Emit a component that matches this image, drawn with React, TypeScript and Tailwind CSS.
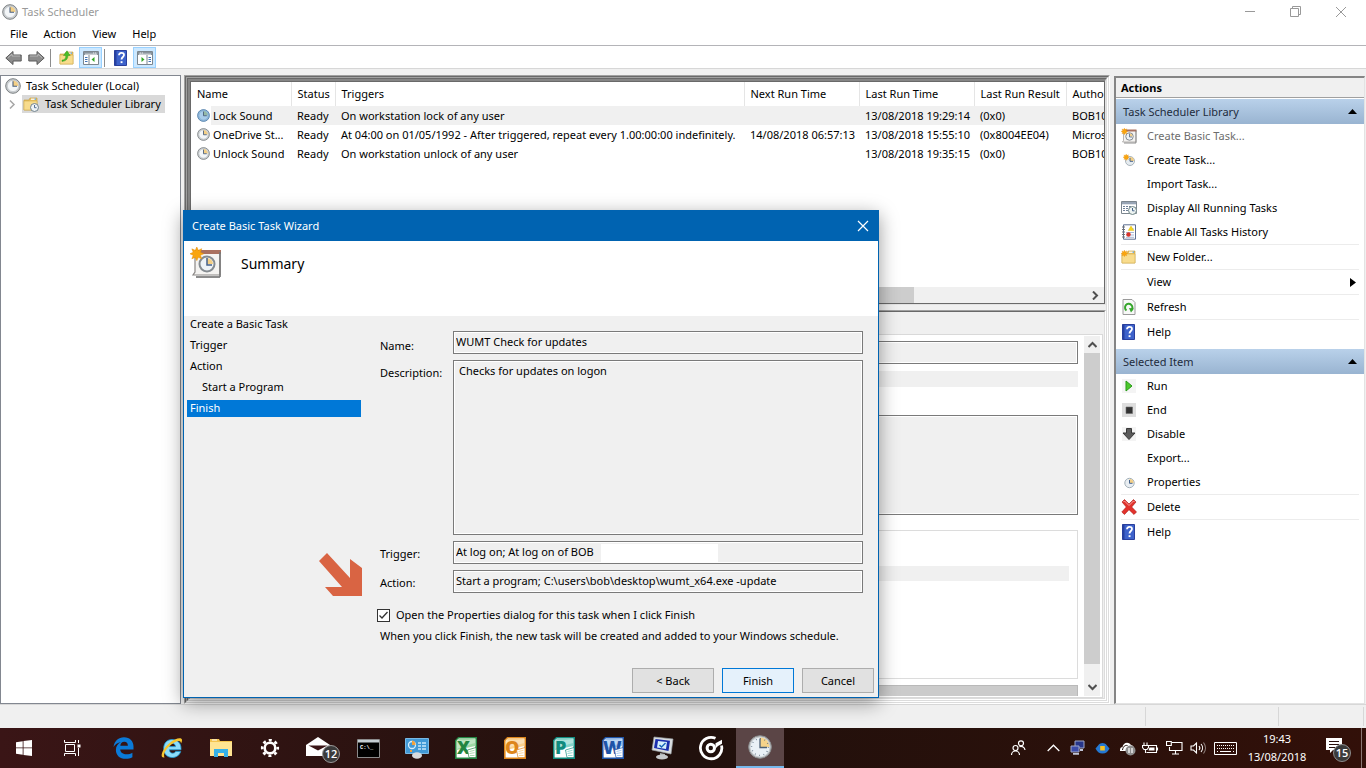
import { useState, ReactNode } from "react"

interface Task { name: string; triggers: string; next: string; last: string; result: string; author: string }
interface Action { label: string; icon?: ReactNode; sep?: boolean; off?: boolean; sub?: boolean }

const tasks: Task[] = [
  { name: "Lock Sound", triggers: "On workstation lock of any user", next: "", last: "13/08/2018 19:29:14", result: "(0x0)", author: "BOB10\\bob" },
  { name: "OneDrive St...", triggers: "At 04:00 on 01/05/1992 - After triggered, repeat every 1.00:00:00 indefinitely.", next: "14/08/2018 06:57:13", last: "13/08/2018 15:55:10", result: "(0x8004EE04)", author: "Microsoft" },
  { name: "Unlock Sound", triggers: "On workstation unlock of any user", next: "", last: "13/08/2018 19:35:15", result: "(0x0)", author: "BOB10\\bob" },
]

const columns = [
  { title: "Name", w: "w-[100px]" },
  { title: "Status", w: "w-11" },
  { title: "Triggers", w: "w-[409px]" },
  { title: "Next Run Time", w: "w-[115px]" },
  { title: "Last Run Time", w: "w-[115px]" },
  { title: "Last Run Result", w: "w-[92px]" },
  { title: "Author", w: "" },
]

function Clock({ size = 16, blue = false }: { size?: number; blue?: boolean }) {
  return (
    <svg width={size} height={size} viewBox="0 0 16 16" className="shrink-0">
      <circle cx="8" cy="8" r="7.3" fill={blue ? "#8fb8dc" : "#c9cdd0"} stroke={blue ? "#4d7ba6" : "#7d8183"} strokeWidth="1" />
      <circle cx="8" cy="8" r="5.6" fill={blue ? "#a9cdea" : "#f3f6f8"} stroke={blue ? "#7aa3c8" : "#b4b9bc"} strokeWidth="0.5" />
      <path d="M8 8V2.6A5.4 5.4 0 0 1 13.4 8Z" fill={blue ? "#94b9a6" : "#f3cf86"} />
      <path d="M8 3.2V8.3H12" fill="none" stroke="#4a5f7c" strokeWidth="1.1" />
    </svg>
  )
}

// larger face with hour ticks
function BigClock() {
  return (
    <svg width="24" height="24" viewBox="0 0 24 24">
      <circle cx="12" cy="12" r="11.3" fill="#c4c8ca" stroke="#8a8d8f" />
      <circle cx="12" cy="12" r="9.6" fill="#eaf1f6" />
      <path d="M12 12V2.4A9.6 9.6 0 0 1 21.6 12z" fill="#f6d389" />
      <circle cx="12" cy="12" r="8.4" fill="none" stroke="#5d6f80" strokeWidth="1.4" strokeDasharray="0.7 3.7" />
      <path d="M12 3.5V12.500H19" fill="none" stroke="#4d6074" strokeWidth="1.3" />
    </svg>
  )
}

function Star({ x = 0, y = 0, s = 1 }: { x?: number; y?: number; s?: number }) {
  return (
    <path transform={`translate(${x} ${y}) scale(${s})`} fill="#f9a50f" stroke="#e68a00" strokeWidth="0.3"
      d="M4 0l.9 2 2-1-.8 2.1L8 4l-1.900.9.800 2-2-.8L4 8l-.9-1.900-2 .800.800-2L0 4l1.900-.9-.8-2 2 .9z" />
  )
}

function TaskPage({ size = 16 }: { size?: number }) {
  return (
    <svg width={size} height={size} viewBox="0 0 32 32">
      <path d="M6 29h24v2H6z" fill="#8c8c8c" />
      <path d="M5 5h25v23H3l2-3z" fill="#f4f3f1" stroke="#8a8785" strokeWidth="1.2" />
      <path d="M5 3h26v4H5z" fill="#a9705f" />
      <path d="M30 5v25" stroke="#777" strokeWidth="1.6" />
      <circle cx="17" cy="17" r="7.500" fill="#eef3f7" stroke="#858b90" strokeWidth="2" />
      <path d="M17 17v-6a6 6 0 0 1 6 6z" fill="#f3cf86" />
      <path d="M17 11v7h5" fill="none" stroke="#45628a" strokeWidth="1.5" />
      <Star s={1.7} />
    </svg>
  )
}

function Folder({ kind }: { kind?: "clock" | "star" | "up" }) {
  return (
    <svg width="16" height="16" viewBox="0 0 16 16">
      <path d="M1 4h5l1-2h7v12H1z" fill="#e9c161" stroke="#c49a3a" strokeWidth="0.6" />
      <path d="M8 2.6h5v1.2H8z" fill="#fff" /><path d="M11.6 2.6H13v1.2h-1.4z" fill="#4a9be0" />
      <path d="M1 5h13v9H1z" fill="#f8dc8d" stroke="#d5ae4f" strokeWidth="0.6" />
      {kind === "star" && <Star s={0.85} y={1} />}
      {kind === "up" && <path d="M3 10c3 0 4-2 3.700-4.500H4.500L8 .8l3.200 4.700H9C9 9 7 11 3 11.500z" fill="#48bf28" stroke="#2a8a13" strokeWidth="0.4" />}
      {kind === "clock" && (
        <g>
          <circle cx="11.500" cy="11.500" r="4" fill="#eef3f7" stroke="#73838e" />
          <path d="M11.500 9v2.700h2" fill="none" stroke="#45628a" strokeWidth="0.9" />
        </g>
      )}
    </svg>
  )
}

function HelpIcon() {
  return (
    <svg width="16" height="16" viewBox="0 0 16 16">
      <path d="M1.500.5h12v15h-12z" fill="#3d62cb" stroke="#2a3f9c" />
      <path d="M1.500.5h2v15h-2z" fill="#2741a0" />
      <path d="M6 5.300C6 2 11 2 11 5c0 2-2.500 2-2.500 4.500" fill="none" stroke="#fff" strokeWidth="1.800" />
      <path d="M7.600 11.200h1.900v1.900H7.600z" fill="#fff" />
    </svg>
  )
}

function Panel({ flip = false }: { flip?: boolean }) {
  return (
    <svg width="16" height="14" viewBox="0 0 16 14" className={flip ? "-scale-x-100" : ""}>
      <path d="M.5.5h15v13H.5z" fill="#fff" stroke="#7c868e" />
      <path d="M1 1h14v3H1z" fill="#89949d" /><path d="M10 2h1.200M12 2h1.200M2 3.200h12" stroke="#fff" strokeWidth="0.8" />
      <path d="M6 4v9" stroke="#7c868e" />
      <path d="M2 6.500h2.500M2 8.500h2.500M2 10.500h2.500" stroke="#3f72b5" />
      <path d="M11.500 6v5L8.500 8.500z" fill="#31a825" />
    </svg>
  )
}

function Arrow({ right = false }: { right?: boolean }) {
  return (
    <svg width="17" height="16" viewBox="0 0 17 16" className={right ? "-scale-x-100" : ""}>
      <path d="M.8 8L8 1.500V5h8.200v6H8v3.500z" fill="#8d8d8d" stroke="#5a5a5a" />
      <path d="M3 7.700L7 4v2h8" fill="none" stroke="#bdbdbd" strokeWidth="0.9" />
    </svg>
  )
}

const libraryActions: Action[] = [
  { label: "Create Basic Task...", icon: <TaskPage />, off: true },
  { label: "Create Task...", icon: <svg width="16" height="16" viewBox="0 0 16 16"><circle cx="9" cy="9" r="4.500" fill="#e6ecf0" stroke="#a9b4bb" /><path d="M9 9V5a4 4 0 0 1 4 4z" fill="#f3cf86" /><path d="M9 6v3.300h3" fill="none" stroke="#45628a" /><Star s={0.8} x={2} y={2} /></svg> },
  { label: "Import Task..." },
  { label: "Display All Running Tasks", icon: <svg width="16" height="16" viewBox="0 0 16 16"><path d="M.5 1.500h15v12H.5z" fill="#fff" stroke="#7c868e" /><path d="M1 2h14v2.300H1z" fill="#97a4b5" /><path d="M2 6.500h2m1 0h2m1 0h2M2 8.500h2m1 0h2M2 10.500h2m1 0h2" stroke="#6f8097" /><circle cx="11.500" cy="10.500" r="4" fill="#eef4f2" stroke="#6f8587" /><path d="M11.500 8v2.800h2" fill="none" stroke="#45628a" /></svg> },
  { label: "Enable All Tasks History", icon: <svg width="16" height="16" viewBox="0 0 16 16"><path d="M2.500.8h12v14.400h-12z" fill="#fff" stroke="#5d6f91" /><path d="M1 3h3M1 5.500h3M1 8h3M1 10.500h3M1 13h3" stroke="#717171" /><path d="M5 8.500h8M5 11h8M5 13.300h8M10 5h3" stroke="#8fa6cd" strokeWidth="0.8" /><path d="M10 2l2.800 4.600H7.200z" fill="#f7d51b" stroke="#d6b000" strokeWidth="0.4" /><circle cx="7.500" cy="10.500" r="2.200" fill="#d8332a" /></svg> },
  { label: "New Folder...", icon: <Folder kind="star" />, sep: true },
  { label: "View", sep: true, sub: true },
  { label: "Refresh", sep: true, icon: <svg width="16" height="16" viewBox="0 0 16 16"><path d="M2 .5h9l3 3v12H2z" fill="#f7f8f7" stroke="#9a9a9a" /><path d="M5.500 11.500A3.700 3.700 0 1 1 10.500 11" fill="none" stroke="#35a52b" strokeWidth="2" /><path d="M8 9l5 .5-3 4z" fill="#35a52b" /></svg> },
  { label: "Help", sep: true, icon: <HelpIcon /> },
]

const itemActions: Action[] = [
  { label: "Run", icon: <svg width="16" height="16" viewBox="0 0 16 16"><path d="M1 1h14v14H1z" fill="#f4f4f4" /><path d="M5 3l6 5-6 5z" fill="#4cc82c" stroke="#279b16" /></svg> },
  { label: "End", icon: <svg width="16" height="16" viewBox="0 0 16 16"><path d="M1 1h14v14H1z" fill="#dedede" /><path d="M5 5h6.500v6.500H5z" fill="#333" stroke="#6b6b6b" strokeWidth="0.6" /></svg> },
  { label: "Disable", icon: <svg width="16" height="16" viewBox="0 0 16 16"><path d="M1 1h14v14H1z" fill="#f4f4f4" /><path d="M5.500 2.500h5V7H14l-6 6.500L2 7h3.500z" fill="#5b5b5b" stroke="#383838" /></svg> },
  { label: "Export..." },
  { label: "Properties", icon: <svg width="16" height="16" viewBox="0 0 16 16"><circle cx="8.500" cy="9" r="4.700" fill="#e9eef2" stroke="#a3b0b8" /><path d="M8.500 9V5a4 4 0 0 1 4 4z" fill="#f3cf86" /><path d="M8.500 6v3.300h3" fill="none" stroke="#45628a" /></svg> },
  { label: "Delete", sep: true, icon: <svg width="16" height="16" viewBox="0 0 16 16"><path d="M1 3l2.500-2.500L8 5 12.500.5 15 3l-4.300 5 4.800 5-2.500 2.500-5-4.800-4.500 4.800L.8 13l4.500-5z" fill="#e3322c" stroke="#a81410" strokeWidth="0.6" /><path d="M2.500 3l1-1L8 6.500 12.500 2l1 1" fill="none" stroke="#f5a19d" /></svg> },
  { label: "Help", sep: true, icon: <HelpIcon /> },
]

// sunken 3D frame, dark on the top left and light on the bottom right
function Bevel({ children, className = "" }: { children: ReactNode; className?: string }) {
  return (
    <div className={`flex min-h-0 min-w-0 border border-t-[#a0a0a0] border-l-[#a0a0a0] border-r-white border-b-white ${className}`}>
      <div className="flex min-h-0 min-w-0 flex-1 flex-col border border-t-[#696969] border-l-[#696969] border-r-[#dcdcdc] border-b-[#dcdcdc]">
        {children}
      </div>
    </div>
  )
}

function Chevron({ d }: { d: string }) {
  return <svg width="9" height="9" viewBox="0 0 9 9"><path d={d} fill="none" stroke="#505050" strokeWidth="2" /></svg>
}

function ActionGroup({ title, items }: { title: string; items: Action[] }) {
  return (
    <section>
      <h3 className="flex h-[25px] items-center justify-between bg-linear-to-b from-[#b9d1ea] to-[#99b4d1] px-[7px] text-[#1e2b3c]">
        {title}
        <svg width="9" height="5" viewBox="0 0 9 5"><path d="M0 5L4.500 0 9 5z" fill="#000" /></svg>
      </h3>
      {items.map((a, i) => (
        <div key={i} className="px-[5px]">
          {a.sep && <div className="h-px bg-[#ececec]" />}
          <button disabled={a.off} className="flex h-6 w-full items-center text-left disabled:text-[#6d6d6d]">
            <span className="mr-[10px] flex w-4 justify-center">{a.icon}</span>
            {a.label}
            {a.sub && <svg width="6" height="9" viewBox="0 0 6 9" className="mr-[3px] ml-auto"><path d="M0 0l6 4.500L0 9z" fill="#000" /></svg>}
          </button>
        </div>
      ))}
    </section>
  )
}

function TaskList() {
  return (
    <div className="flex h-[226px] shrink-0 flex-col border-t-2 border-r border-b border-l-2 border-t-[#858585] border-r-[#e3e3e3] border-b-[#e3e3e3] border-l-[#858585]">
      <div className="flex min-h-0 flex-1 flex-col border border-[#696969] bg-white">
        <div className="min-h-0 flex-1 overflow-hidden">
          <table className="w-full table-fixed text-left whitespace-nowrap">
            <thead>
              <tr className="h-6">
                {columns.map((c) => (
                  <th key={c.title} className={`overflow-hidden border-r border-[#e5e5e5] p-0 pl-[6px] font-normal last:border-r-0 ${c.w}`}>{c.title}</th>
                ))}
              </tr>
            </thead>
            <tbody>
              {tasks.map((t, i) => (
                <tr key={t.name} className={`h-[19px] ${i === 0 ? "bg-[#f0f0f0]" : ""}`}>
                  <td className="bg-white p-0">
                    <div className="flex items-center pl-[6px]">
                      <Clock size={13} blue={i === 0} />
                      <span className={`ml-px flex-1 pl-[2px] leading-[19px] ${i === 0 ? "bg-[#f0f0f0]" : ""}`}>{t.name}</span>
                    </div>
                  </td>
                  {["Ready", t.triggers, t.next, t.last, t.result, t.author].map((v, j) => (
                    <td key={j} className="overflow-hidden p-0 pl-[6px]">{v}</td>
                  ))}
                </tr>
              ))}
            </tbody>
          </table>
        </div>
        <div className="flex h-4 items-center bg-[#f0f0f0]">
          <div className="ml-4 h-full w-[707px] bg-[#cdcdcd]" />
          <div className="mr-1 ml-auto"><Chevron d="M2 .5l4 4-4 4" /></div>
        </div>
      </div>
    </div>
  )
}

function Preview() {
  const box = "border border-[#7a7a7a] bg-[#f0f0f0] shadow-[inset_0_0_0_1px_#fff]"
  return (
    <Bevel className="mt-[5px] flex-1">
      <div className="flex min-h-0 flex-1 flex-col bg-[#f0f0f0] pt-[22px] pr-px">
        <div className="flex min-h-0 flex-1 border border-[#d9d9d9] bg-white pt-px pr-[2px] pb-px">
          <div className="flex min-w-0 flex-1 flex-col overflow-hidden pt-[5px] pr-[6px] pl-5">
            <div className={`h-[23px] shrink-0 ${box}`} />
            <div className="mt-[7px] h-4 shrink-0 bg-[#f0f0f0]" />
            <div className={`mt-7 h-[100px] shrink-0 ${box}`} />
            <div className="mt-[15px] h-[149px] shrink-0 border border-[#dcdcdc] pt-[35px] pr-2"><div className="h-[15px] bg-[#f0f0f0]" /></div>
            <div className="mt-[6px] flex-1 border border-b-0 border-[#b9b9b9] bg-[#cbcbcb]" />
          </div>
          <div className="flex w-4 flex-col items-center bg-[#f0f0f0]">
            <div className="flex h-[17px] items-center"><Chevron d="M.5 7l4-4 4 4" /></div>
            <div className="w-full flex-1 bg-[#cdcdcd]" />
            <div className="mt-[19px] mb-1"><Chevron d="M.5 2l4 4 4-4" /></div>
          </div>
        </div>
      </div>
    </Bevel>
  )
}

const steps = ["Create a Basic Task", "Trigger", "Action", "Start a Program", "Finish"]

function Wizard() {
  const [open, setOpen] = useState(true)
  const field = "w-full border border-[#7a7a7a] bg-[#f0f0f0] px-[2px] shadow-[inset_0_0_0_1px_#fff] outline-none"
  const row = "grid grid-cols-[73px_1fr]"
  const button = "h-[25px] border border-[#adadad] bg-[#e1e1e1]"
  return (
    <div role="dialog" aria-labelledby="wizard-title" className="absolute top-[210px] left-[183px] w-[696px] border border-[#0063b1] bg-[#f0f0f0] shadow-[0_5px_18px_rgba(0,0,0,0.4)]">
      <div className="flex h-[30px] items-center justify-between bg-[#0063b1] pr-[9px] pl-2 text-white">
        <h2 id="wizard-title">Create Basic Task Wizard</h2>
        <button aria-label="Close"><svg width="12" height="12" viewBox="0 0 12 12"><path d="M1 1l10 10M11 1L1 11" stroke="#fff" strokeWidth="1.200" /></svg></button>
      </div>
      <div className="flex h-[75px] gap-[18px] bg-white pt-[6px] pl-[6px]">
        <TaskPage size={32} />
        <h3 className="pt-[7px] pl-px text-[14px] leading-5">Summary</h3>
      </div>
      <div className="flex pr-[15px] pl-[3px]">
        <ol className="w-[174px] space-y-1">
          {steps.map((s, i) => (
            <li key={s} className={`h-[17px] leading-[16px] ${i === 3 ? "pl-[15px]" : "pl-[3px]"} ${i === 4 ? "bg-[#0078d7] text-white" : ""}`}>{s}</li>
          ))}
        </ol>
        <form className="ml-[19px] flex-1 pt-[15px]" onSubmit={(e) => e.preventDefault()}>
          <div className={row}>
            <label htmlFor="name" className="pt-[7px]">Name:</label>
            <input id="name" readOnly value="WUMT Check for updates" className={`h-[23px] pb-[2px] ${field}`} />
          </div>
          <div className={`mt-[6px] ${row}`}>
            <label htmlFor="desc" className="pt-[5px]">Description:</label>
            <textarea id="desc" readOnly value="Checks for updates on logon" className={`block h-[175px] resize-none pt-[2px] indent-[3px] ${field}`} />
          </div>
          <div className={`mt-[6px] ${row}`}>
            <label htmlFor="trigger" className="pt-[5px]">Trigger:</label>
            <div className="relative">
              <input id="trigger" readOnly value="At log on; At log on of BOB" className={`block h-[23px] pb-[2px] ${field}`} />
              <span className="absolute top-[3px] left-[148px] h-[18px] w-[117px] bg-white" />
            </div>
          </div>
          <div className={`mt-[6px] ${row}`}>
            <label htmlFor="action" className="pt-[5px]">Action:</label>
            <input id="action" readOnly value="Start a program; C:\users\bob\desktop\wumt_x64.exe -update" className={`h-[23px] pb-[2px] ${field}`} />
          </div>
          <label className="mt-[14px] -ml-[3px] flex items-center gap-[6px]">
            <span className="grid">
              <input type="checkbox" checked={open} onChange={() => setOpen(!open)} className="col-start-1 row-start-1 size-[13px] appearance-none border border-[#333] bg-white" />
              {open && <svg width="13" height="13" viewBox="0 0 13 13" className="pointer-events-none col-start-1 row-start-1"><path d="M2.500 6.500L5 9l5.500-6" fill="none" stroke="#333" strokeWidth="1.300" /></svg>}
            </span>
            Open the Properties dialog for this task when I click Finish
          </label>
          <p className="mt-[5px] whitespace-nowrap">When you click Finish, the new task will be created and added to your Windows schedule.</p>
        </form>
      </div>
      <div className="mt-6 flex justify-end gap-2 pr-1 pb-1">
        <button className={`w-[82px] ${button}`}>&lt; Back</button>
        <button className="h-[25px] w-[72px] border border-[#0078d7] bg-[#e5f1fb]">Finish</button>
        <button className={`w-[72px] ${button}`}>Cancel</button>
      </div>
      {/* callout arrow */}
      <svg width="44" height="43" viewBox="0 0 44 43" className="absolute top-[342px] left-[135px]">
        <path d="M8 0l23 25V6l12 9v28H14L6 34h17L0 8z" fill="#d96443" />
      </svg>
    </div>
  )
}

// Office tile: coloured page with the initial and a small document
function Office({ letter, color, light, x = 2 }: { letter: string; color: string; light: string; x?: number }) {
  return (
    <svg width="22" height="22" viewBox="0 0 22 22">
      <path d="M3.500.8h17.700v20.400H.8V3.500z" fill="#fff" stroke={color} strokeWidth="1.600" />
      <path d="M4 1.600h16.400V9L1.600 13V4z" fill={light} />
      <path d="M2 2.500C8 4 14 3 20 2v4C14 8 8 9 2 12z" fill="#fff" opacity="0.35" />
      <text x={x} y="17" fontFamily="Open Sans, sans-serif" fontWeight="800" fontSize="18" fill={color}>{letter}</text>
      <path d="M12.500 13l8.500-2.500v10h-7z" fill="#fff" stroke={color} strokeWidth="0.7" />
      <path d="M14.500 14.500l5-1.200M14.500 16.500l5-.8M15 18.500h4.500" stroke={light} strokeWidth="0.9" />
    </svg>
  )
}

const apps: { name: string; icon: ReactNode }[] = [
  { name: "Edge", icon: <svg width="21" height="22" viewBox="0 0 21 22"><path d="M.5 10C1.500 3.800 5.500.3 11 .3c6 0 9.500 4.200 9.500 9.200v3H7.200c.2 3.200 3 4.800 6.300 4.800 2.300 0 4.200-.6 5.900-1.600v4.500c-2 1-4.200 1.500-6.700 1.500-6 0-9.800-3.500-9.800-8.800 0-3.600 2-6.400 5.200-7.900C4.600 5.600 2 7.300.5 10zM7.300 8.800h7.600c0-2.400-1.300-4-3.700-4-2.100 0-3.600 1.600-3.900 4z" fill="#0b7ad8" /></svg> },
  { name: "Internet Explorer", icon: <svg width="24" height="24" viewBox="0 0 24 24"><path d="M12 3.500c5.500 0 9 3.600 9 9v1.300H9.300c.2 2.200 1.500 3.400 3.400 3.400 1.400 0 2.400-.6 2.900-1.700h5.100c-1.200 3.800-4.200 6-8.300 6-5.200 0-8.700-3.600-8.700-9s3.400-9 8.300-9zM9.400 10.600h6.100c-.2-2-1.300-3.200-3-3.200-1.800 0-2.900 1.200-3.100 3.200z" fill="#8ddcfa" stroke="#1a9cd8" strokeWidth="0.8" /><path d="M4.500 21.500C-1 22.500 2 13.500 9 7.500S22.500 1 22 4.500c0 1-.4 2-1 3 .1-4-4.500-3.300-10 1.300C5.500 13.500 3 18.500 4.500 21.500z" fill="#f7c530" /></svg> },
  { name: "File Explorer", icon: <svg width="22" height="20" viewBox="0 0 22 20"><path d="M0 1h9l1 2h12v15H0z" fill="#f4c44e" /><path d="M0 4h22v14H0z" fill="#ffe492" /><path d="M2 1.500h5v1H2z" fill="#fff" /><path d="M4 11h14v8h-4v-4H8v4H4z" fill="#36b1e8" /></svg> },
  { name: "Settings", icon: <svg width="20" height="20" viewBox="0 0 20 20" fill="none" stroke="#fff"><circle cx="10" cy="10" r="5.300" strokeWidth="2.600" /><circle cx="10" cy="10" r="7.800" strokeWidth="2.600" strokeDasharray="3 3.126" strokeDashoffset="1.500" /></svg> },
  { name: "Mail", icon: <svg width="36" height="28" viewBox="0 0 36 28" className="translate-x-1 translate-y-[2px]"><path d="M1 9L13 1l12 8v11H1z" fill="#fff" /><path d="M3.500 9.500h19L13 14.500z" fill="#3a1516" /><circle cx="26" cy="18" r="8.500" fill="#3b3b3b" stroke="#999" /><text x="26" y="22" textAnchor="middle" fontFamily="Open Sans, sans-serif" fontWeight="600" fontSize="11" fill="#fff">12</text></svg> },
  { name: "Command Prompt", icon: <svg width="23" height="19" viewBox="0 0 23 19"><path d="M.5.5h22v18H.5z" fill="#000" stroke="#8b8b8b" /><path d="M1 1h21v2.500H1z" fill="#c5ced3" /><text x="3" y="9.500" fontFamily="Liberation Mono, monospace" fontSize="5.500" fontWeight="700" fill="#fff">C:\_</text></svg> },
  { name: "Control Panel", icon: <svg width="24" height="22" viewBox="0 0 24 22"><path d="M.5 1.500h23v15H.5z" fill="#4199d6" stroke="#78b9e5" /><circle cx="7" cy="8" r="3.500" fill="none" stroke="#d6efff" strokeWidth="1.300" /><path d="M7 8V3.500A4 4 0 0 1 10.500 8z" fill="#f4a13b" /><path d="M13 6h3m1 0h4M13 9h3m1 0h4M13 12h3m1 0h4" stroke="#c8e8fc" strokeWidth="1.500" /><path d="M6 13v2" stroke="#f4a13b" strokeWidth="2" /><ellipse cx="12" cy="18.500" rx="5" ry="3.300" fill="#d7dadd" /></svg> },
  { name: "Excel", icon: <Office letter="X" color="#238542" light="#9fd8a5" /> },
  { name: "Outlook", icon: <Office letter="O" color="#dd861b" light="#fbd28e" x={1} /> },
  { name: "Publisher", icon: <Office letter="P" color="#118b7f" light="#87d5cb" /> },
  { name: "Word", icon: <Office letter="W" color="#1f54a8" light="#9cc2ee" x={1} /> },
  { name: "Remote", icon: <svg width="23" height="24" viewBox="0 0 23 24"><path d="M3 1l19 2-2 15L1 14z" fill="#d9dde0" stroke="#9ca3a8" strokeWidth="0.7" /><path d="M4.500 3L19 4.700 17.500 15 3 12z" fill="#1b2fae" /><path d="M7 5l9 1-1 7-9-1.500z" fill="#d5f0fc" /><path d="M8.500 9l2 2 4-4" fill="none" stroke="#1764b8" strokeWidth="1.400" /><path d="M9 17l5 1v2h-5z" fill="#a9adb0" /><ellipse cx="11" cy="21" rx="6" ry="2.500" fill="#c6c9cb" /></svg> },
  { name: "Groove", icon: <svg width="26" height="26" viewBox="0 0 26 26"><path d="M17.500 3.300A10.700 10.700 0 1 0 23.500 10.500" fill="none" stroke="#fff" strokeWidth="2.800" /><circle cx="12.800" cy="13" r="3.700" fill="none" stroke="#fff" strokeWidth="3" /><path d="M17.500 13.500V8.300L24 4.800v4l-4 2.200" fill="#fff" /></svg> },
  { name: "Task Scheduler", icon: <BigClock /> },
]

const tray: { name: string; w: string; icon: ReactNode }[] = [
  { name: "People", w: "w-[42px]", icon: <svg width="16" height="16" viewBox="0 0 16 16" fill="none" stroke="#fff" strokeWidth="1.200"><circle cx="5.500" cy="8" r="2.500" /><path d="M1.500 15a4 4 0 0 1 8 0" /><circle cx="11" cy="3.300" r="2.500" /><path d="M9.500 6.600A4 4 0 0 1 15 10" /></svg> },
  { name: "Show hidden icons", w: "w-7", icon: <svg width="13" height="8" viewBox="0 0 13 8"><path d="M.7 7l5.800-5.800L12.300 7" fill="none" stroke="#fff" strokeWidth="1.300" /></svg> },
  { name: "Network computers", w: "w-5", icon: <svg width="15" height="16" viewBox="0 0 15 16"><path d="M5 1h9v7H5z" fill="#27368b" stroke="#9fa7c9" /><path d="M1 6h8v6H1z" fill="#3c4cab" stroke="#9fa7c9" /><path d="M3 13h6v1.800H3zM10 9h3v2h-3z" fill="#c0c4d6" /></svg> },
  { name: "Security", w: "w-[30px]", icon: <svg width="15" height="12" viewBox="0 0 15 12"><path d="M.5 6.500C3 4 4 1 7.500 1S12 4 14.500 6.500C13 9.500 11 11.500 7.500 11.500S2 9.500.5 6.500z" fill="#2478d2" /><path d="M5.200 4h4.600v4.500H5.200z" fill="#f7c223" /></svg> },
  { name: "OneDrive", w: "w-5", icon: <svg width="17" height="16" viewBox="0 0 17 16"><path d="M1 10c0-2 1-3 2.500-3C4 3 9 1 12 5c2 .5 3 1.500 3 4v2H1z" fill="#fff" /><path d="M3.500 10C4 6.500 6 5 8.500 5.500" fill="none" stroke="#20100c" /><circle cx="11.500" cy="10.500" r="5" fill="#8e8e8e" /><path d="M10 8v5M13 8v5" stroke="#fff" strokeWidth="1.200" /></svg> },
  { name: "Battery", w: "w-[26px]", icon: <svg width="17" height="13" viewBox="0 0 17 13" fill="none" stroke="#fff" strokeWidth="1.100"><path d="M7 3.500h7.500v7H4.500M15.500 5.500v3M2 .5v3M5 .5v3M.5 3.500h6v2l-1.500 2H2l-1.500-2zM3.500 7.500V11" /><path d="M7.500 5.500h5v3h-6z" fill="#fff" stroke="none" /></svg> },
  { name: "Network", w: "w-[22px]", icon: <svg width="17" height="14" viewBox="0 0 17 14" fill="none" stroke="#fff" strokeWidth="1.100"><path d="M6 1.500h10v8H3.500V6M9.500 9.500V13M6 13h7M.5.500h4.800v4H.5z" /></svg> },
  { name: "Volume", w: "w-[26px]", icon: <svg width="17" height="14" viewBox="0 0 17 14" fill="none" stroke="#fff" strokeWidth="1.100"><path d="M1 5h2.500l3-3v10l-3-3H1zM9 5a3 3 0 0 1 0 4M11 3a6 6 0 0 1 0 8" /><path d="M13.500 1.500a9 9 0 0 1 0 11" opacity="0.5" /></svg> },
  { name: "Touch keyboard", w: "w-7", icon: <svg width="23" height="13" viewBox="0 0 23 13" fill="none" stroke="#fff"><path d="M.5.5h22v12H.5z" /><path d="M3 3.500h18M3 6.500h18" strokeDasharray="1 1" /><path d="M3 9.500h1M6 9.500h11M19 9.500h1" /></svg> },
]

function Taskbar() {
  return (
    <footer className="flex h-10 items-stretch bg-linear-to-r from-[#3a1516] via-[#20100c] to-[#321009] text-white">
      <button aria-label="Start" className="grid w-12 place-items-center">
        <svg width="16" height="16" viewBox="0 0 16 16"><path d="M0 2.200l6.700-1v6.300H0zM7.500 1L16 0v7.500H7.500zM0 8.300h6.700v6.400l-6.700-1zM7.500 8.300H16V16l-8.500-1.100z" fill="#fff" /></svg>
      </button>
      <button aria-label="Task View" className="mr-[3px] grid w-12 place-items-center">
        <svg width="17" height="16" viewBox="0 0 17 16" fill="none" stroke="#fff"><path d="M1.500 4.500h9v7h-9zM.5 0v2.500h11V0M.5 16v-2.500h11V16M14.500 0v3M14.500 8v8" /><path d="M13.500 4.500h3v3h-3z" fill="#fff" stroke="none" /></svg>
      </button>
      <nav className="flex gap-px">
        {apps.map((a, i) => (
          <button key={a.name} aria-label={a.name} className={`grid w-12 place-items-center ${i === apps.length - 1 ? "border-b-2 border-[#76b9ed] bg-[#5b4546]" : ""}`}>{a.icon}</button>
        ))}
      </nav>
      <div className="ml-auto flex">
        {tray.map((t) => (
          <button key={t.name} aria-label={t.name} className={`grid place-items-center ${t.w}`}>{t.icon}</button>
        ))}
        <button className="w-[76px] text-center leading-[18px]">19:43<br />13/08/2018</button>
        <button aria-label="Notifications" className="grid w-[46px] place-items-center">
          <svg width="27" height="26" viewBox="0 0 27 26" className="translate-y-[2px]"><path d="M1 1h16v12H8l-3 3v-3H1z" fill="#fff" /><path d="M4 4.500h10M4 7.500h10M4 10.500h6" stroke="#2a100c" strokeWidth="1.200" /><circle cx="17" cy="16" r="8.500" fill="#3b3b3b" stroke="#8d8d8d" /><text x="17" y="20" textAnchor="middle" fontFamily="Open Sans, sans-serif" fontWeight="600" fontSize="11" fill="#fff">15</text></svg>
        </button>
        <div className="w-[5px] border-l border-[#8a7673]" />
      </div>
    </footer>
  )
}

export default function App() {
  return (
    <div className="relative flex min-h-screen flex-col overflow-hidden bg-white font-['Noto_Sans','Open_Sans',sans-serif] text-[11px] leading-4 text-black">
      <header className="flex h-[23px] items-center gap-1 pl-[2px] text-[#999]">
        <Clock size={16} />
        <h1>Task Scheduler</h1>
        <div className="ml-auto flex items-center gap-[34px] pr-[19px]">
          <button aria-label="Minimize"><svg width="12" height="11" viewBox="0 0 12 11"><path d="M1 5.500h10" stroke="#999" /></svg></button>
          <button aria-label="Restore"><svg width="11" height="11" viewBox="0 0 11 11" fill="none" stroke="#999"><path d="M.5 2.500h8v8h-8zM2.500 2V.5h8v8H9" /></svg></button>
          <button aria-label="Close"><svg width="12" height="12" viewBox="0 0 12 12"><path d="M1 1l10 10M11 1L1 11" stroke="#999" /></svg></button>
        </div>
      </header>
      <nav className="flex h-[23px] items-center gap-4 border-b border-[#b4b4b8] pl-[10px]">
        <button>File</button><button>Action</button><button>View</button><button>Help</button>
      </nav>
      <div className="flex h-[23px] items-center border-b border-[#d7d7d7] pt-px pl-[5px]">
        <button aria-label="Back"><Arrow /></button>
        <button aria-label="Forward" className="ml-[6px]"><Arrow right /></button>
        <div className="ml-[5px] h-[18px] w-px bg-[#8d8d8d]" />
        <button aria-label="Up" className="ml-2"><Folder kind="up" /></button>
        <button aria-label="Show tree" className="ml-1 grid h-[21px] w-[23px] place-items-center border border-[#99d1ff] bg-[#cce8ff]"><Panel /></button>
        <div className="ml-[2px] h-[18px] w-px bg-[#8d8d8d]" />
        <button aria-label="Help" className="ml-2"><HelpIcon /></button>
        <button aria-label="Show actions" className="ml-1 grid h-[21px] w-[23px] place-items-center border border-[#99d1ff] bg-[#cce8ff]"><Panel flip /></button>
      </div>

      <main className="flex min-h-0 flex-1 bg-[#f0f0f0] pt-[6px] pr-px">
        <aside className="w-[181px] shrink-0 border border-[#828790] bg-white pt-px pl-1">
          <button className="flex h-[18px] items-center gap-[5px]"><Clock size={16} />Task Scheduler (Local)</button>
          <div className="flex h-[18px] items-center">
            <svg width="7" height="9" viewBox="0 0 7 9" className="ml-1"><path d="M1 .5l4 4-4 4" fill="none" stroke="#a6a6a6" strokeWidth="1.500" /></svg>
            <button className="ml-[6px] flex h-[18px] items-center gap-[6px] bg-[#d9d9d9] pr-1 pl-[1px]"><Folder kind="clock" />Task Scheduler Library</button>
          </div>
        </aside>
        <Bevel className="ml-[3px] flex-1">
          <Bevel className="flex-1">
            <TaskList />
            <Preview />
          </Bevel>
        </Bevel>
        <aside className="mt-px ml-1 w-[251px] shrink-0 border-t-2 border-r border-b border-l-2 border-t-[#858585] border-r-[#e3e3e3] border-b-[#e3e3e3] border-l-[#858585] bg-white">
          <h2 className="mb-px h-5 border-b border-[#a0a0a0] bg-[#f0f0f0] pt-[2px] pl-[5px] font-bold">Actions</h2>
          <ActionGroup title="Task Scheduler Library" items={libraryActions} />
          <div className="h-[5px]" />
          <ActionGroup title="Selected Item" items={itemActions} />
        </aside>
      </main>
      <div className="flex h-6 justify-end border-t border-[#d7d7d7] bg-[#f0f0f0] py-[2px] pr-[2px]">
        <div className="w-[133px] border-l border-[#d7d7d7]" />
        <div className="w-[86px] border-x border-[#d7d7d7]" />
      </div>
      <Taskbar />
      <Wizard />
    </div>
  )
}
